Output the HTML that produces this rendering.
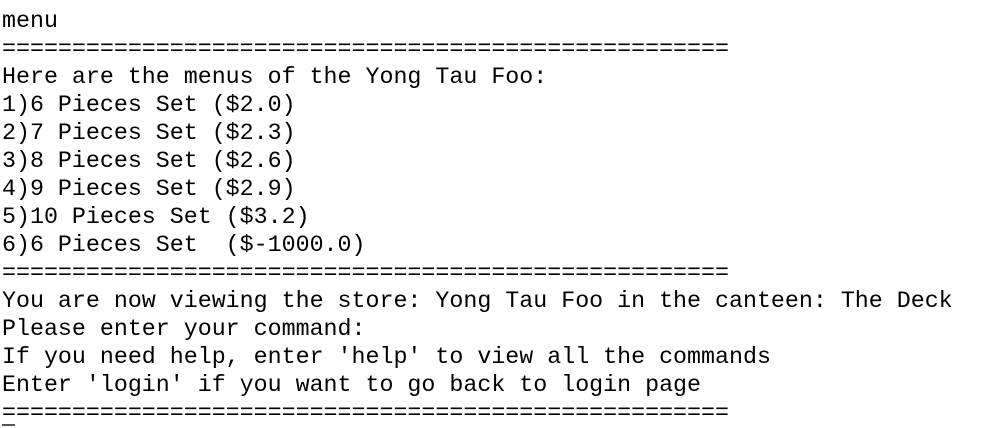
<html><head><style>
body{margin:0;background:#fff;overflow:hidden;}
pre{margin:0;padding:7px 0 0 2px;font-family:"Liberation Mono",monospace;font-size:23.3px;line-height:28px;color:#000;}
.cur{position:absolute;left:2px;top:424px;width:13px;height:2px;background:#555;}
</style></head><body><pre>menu
====================================================
Here are the menus of the Yong Tau Foo:
1)6 Pieces Set ($2.0)
2)7 Pieces Set ($2.3)
3)8 Pieces Set ($2.6)
4)9 Pieces Set ($2.9)
5)10 Pieces Set ($3.2)
6)6 Pieces Set  ($-1000.0)
====================================================
You are now viewing the store: Yong Tau Foo in the canteen: The Deck
Please enter your command:
If you need help, enter 'help' to view all the commands
Enter 'login' if you want to go back to login page
====================================================</pre><div class="cur"></div></body></html>
